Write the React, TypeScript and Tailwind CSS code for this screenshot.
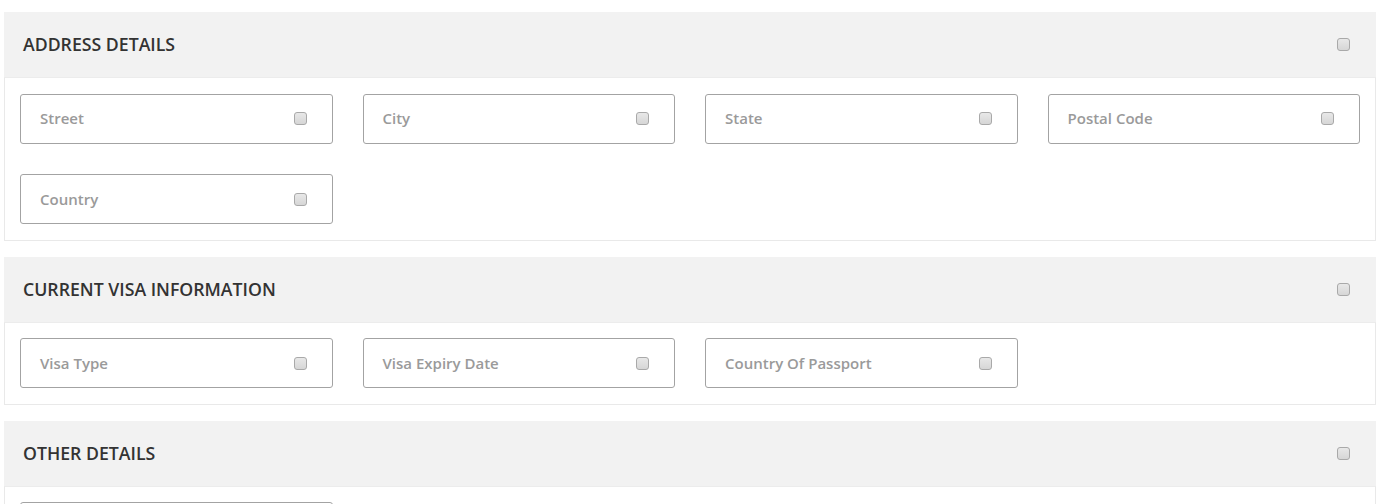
import React from "react";

function Box() {
  return (
    <span className="inline-block w-[13px] h-[13px] rounded-[3px] border border-[#a9a9a9] bg-gradient-to-b from-[#e8e8e8] to-[#d6d6d6] shrink-0" />
  );
}

function Field({ label }: { label: string }) {
  return (
    <div className="h-[50px] border border-[#a3a3a3] rounded-[3px] flex items-center justify-between pl-[19px] pr-[25px] bg-white">
      <span className="text-[15px] font-semibold text-[#9a9a9a]">{label}</span>
      <Box />
    </div>
  );
}

function Section({ title, fields }: { title: string; fields: string[] }) {
  return (
    <div className="mb-[16px]">
      <div className="h-[65px] bg-[#f2f2f2] flex items-center justify-between pl-[19px] pr-[26px]">
        <span className="text-[17.7px] font-semibold text-[#333333]">{title}</span>
        <Box />
      </div>
      <div className="border border-t-[#ececec] border-[#e9e9e9] px-[15px] pt-[15.5px] pb-[15.5px] grid grid-cols-4 gap-x-[30px] gap-y-[30.5px]">
        {fields.map((f, i) => (
          <Field key={i} label={f} />
        ))}
      </div>
    </div>
  );
}

export default function App() {
  return (
    <div className="bg-white w-[1391px] h-[504px] overflow-hidden pt-[12px] pl-[4px]" style={{ fontFamily: '"Open Sans", sans-serif' }}>
      <div className="w-[1372px]">
        <Section title="ADDRESS DETAILS" fields={["Street", "City", "State", "Postal Code", "Country"]} />
        <Section title="CURRENT VISA INFORMATION" fields={["Visa Type", "Visa Expiry Date", "Country Of Passport"]} />
        <Section title="OTHER DETAILS" fields={[""]} />
      </div>
    </div>
  );
}
